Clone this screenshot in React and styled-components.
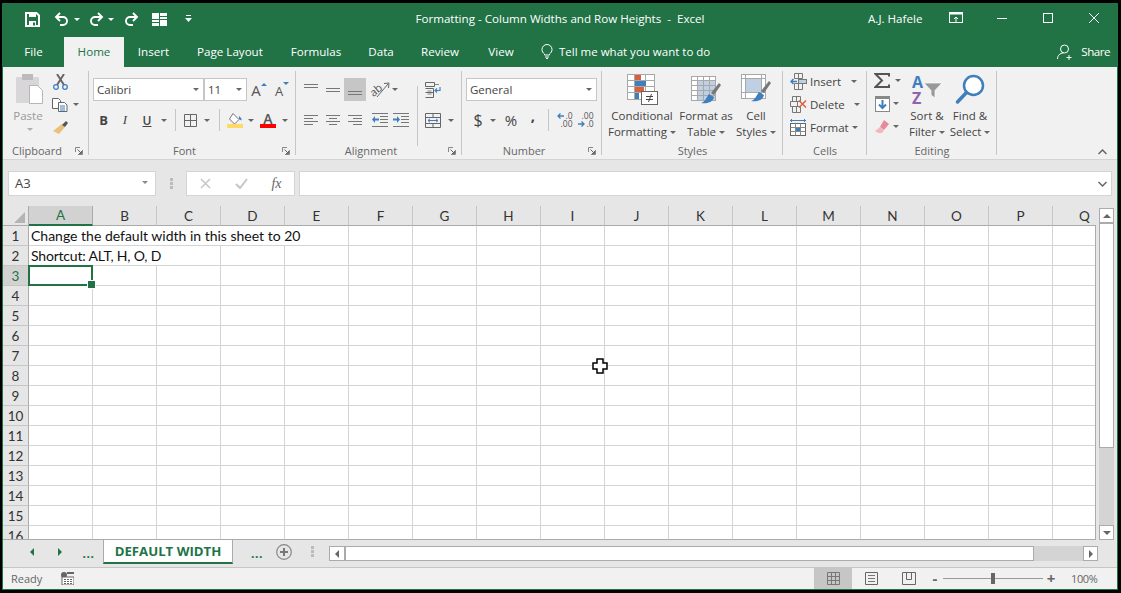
import React from 'react';
import styled, { createGlobalStyle } from 'styled-components';

const UI_FONT = '"Open Sans", "Noto Sans", sans-serif';
const CELL_FONT = '"Lato", "Open Sans", sans-serif';
const GREEN = '#217346';
const BLUE = '#3f7fbd';

const GlobalStyle = createGlobalStyle`
  html, body { margin: 0; padding: 0; height: 100%; background: #000; overflow: hidden; }
  * { box-sizing: border-box; }
`;

const Window = styled.div`
  position: relative;
  width: 1116px;
  height: 587px;
  margin: 3px 0 0 2px;
  border: 1px solid ${GREEN};
  border-top: 0;
  background: #e6e6e6;
  display: flex;
  flex-direction: column;
  font-family: ${UI_FONT};
  overflow: hidden;
`;

/* title bar */
const TitleBar = styled.div`
  height: 34px;
  flex: none;
  padding-bottom: 4px;
  background: ${GREEN};
  color: #fff;
  display: grid;
  grid-template-columns: 1fr auto 1fr;
  align-items: center;
`;
const Quick = styled.div`
  display: flex;
  align-items: center;
  padding: 2px 0 0 22px;
`;
const QuickSlot = styled.span`
  width: ${(p) => p.$w}px;
  flex: none;
  display: flex;
  justify-content: center;
  align-items: center;
`;
const WindowTitle = styled.div`
  font-size: 11.6px;
  white-space: pre;
`;
const TitleRight = styled.div`
  display: flex;
  align-items: center;
  justify-content: flex-end;
  font-size: 11.6px;
`;
const UserName = styled.span`
  width: 81px;
`;
const WinBtn = styled.span`
  width: ${(p) => p.$w}px;
  display: flex;
  justify-content: center;
`;

/* tabs */
const TabRow = styled.div`
  height: 30px;
  flex: none;
  background: ${GREEN};
  display: flex;
  align-items: stretch;
`;
const Tab = styled.div`
  width: ${(p) => p.$w}px;
  display: flex;
  align-items: center;
  justify-content: center;
  font-size: 11.6px;
  padding-bottom: 1px;
  color: ${(p) => (p.$active ? GREEN : '#fff')};
  background: ${(p) => (p.$active ? '#f1f1f1' : 'transparent')};
`;
const TellMe = styled.div`
  display: flex;
  align-items: center;
  gap: 6px;
  margin-left: 12px;
  padding-bottom: 1px;
  font-size: 11.5px;
  color: #fff;
`;
const Share = styled.div`
  margin-left: auto;
  display: flex;
  align-items: center;
  gap: 7px;
  padding: 0 7px 1px 0;
  font-size: 11.6px;
  letter-spacing: -0.5px;
  color: #fff;
`;

/* ribbon */
const Ribbon = styled.div`
  height: 93px;
  flex: none;
  background: #f1f1f1;
  border-bottom: 1px solid #d4d4d4;
  display: flex;
  color: #444;
  font-size: 11.5px;
`;
const Group = styled.section`
  position: relative;
  width: ${(p) => p.$w}px;
  flex: none;
  display: flex;
  flex-direction: column;
  &::after {
    content: '';
    position: absolute;
    top: 4px;
    bottom: 4px;
    right: 0;
    width: 1px;
    background: #c6c6c6;
  }
`;
const GroupBody = styled.div`
  height: 76px;
  flex: none;
  display: flex;
  padding-left: ${(p) => p.$pl || 0}px;
  padding-top: ${(p) => p.$pt || 0}px;
`;
const GroupLabel = styled.div`
  position: relative;
  height: 16px;
  line-height: 16px;
  text-align: center;
  color: #666;
  font-size: 11px;
  padding-right: ${(p) => p.$pr || 0}px;
`;
const Launcher = styled.span`
  position: absolute;
  right: 6px;
  top: 4px;
  display: block;
  line-height: 0;
`;
const Collapse = styled.div`
  flex: 1;
  display: flex;
  align-items: flex-end;
  justify-content: flex-end;
  padding: 0 10px 4px 0;
`;
const PasteCol = styled.div`
  width: 35px;
  flex: none;
  display: flex;
  flex-direction: column;
  align-items: center;
  padding-top: 7px;
  color: #999;
`;
const PasteLabel = styled.div`
  line-height: 16px;
  margin-top: 3px;
  margin-left: -3px;
  margin-bottom: 4px;
`;
const SmallCol = styled.div`
  display: flex;
  flex-direction: column;
  width: ${(p) => (p.$w ? `${p.$w}px` : 'auto')};
`;
const Row = styled.div`
  display: flex;
  align-items: center;
  height: ${(p) => p.$h || 22}px;
  margin-top: ${(p) => p.$mt || 0}px;
  margin-left: ${(p) => p.$ml || 0}px;
`;
const Slot = styled.span`
  width: ${(p) => p.$w}px;
  height: ${(p) => p.$h || 22}px;
  flex: none;
  display: flex;
  align-items: center;
  justify-content: center;
  background: ${(p) => (p.$active ? '#c6c6c6' : 'transparent')};
`;
const Caret = styled.i`
  display: inline-block;
  width: 0;
  height: 0;
  margin-left: ${(p) => p.$ml || 0}px;
  border-left: 3px solid transparent;
  border-right: 3px solid transparent;
  border-top: 3px solid ${(p) => p.$color || '#666'};
  vertical-align: middle;
`;
const VLine = styled.span`
  display: block;
  width: 1px;
  height: ${(p) => p.$h || 22}px;
  background: #c6c6c6;
`;
const SelectBox = styled.div`
  width: ${(p) => p.$w}px;
  height: 23px;
  flex: none;
  background: #fff;
  border: 1px solid #c6c6c6;
  display: flex;
  align-items: center;
  justify-content: space-between;
  padding: 0 4px 0 3px;
  color: #444;
  font-size: 11.5px;
`;
const GlyphBtn = styled.span`
  display: block;
  font-family: ${(p) => p.$font || UI_FONT};
  font-size: ${(p) => p.$size || 13}px;
  font-weight: ${(p) => p.$weight || 400};
  font-style: ${(p) => (p.$italic ? 'italic' : 'normal')};
  text-decoration: ${(p) => (p.$under ? 'underline' : 'none')};
  color: ${(p) => p.$color || '#444'};
  line-height: ${(p) => p.$lh || 'normal'};
  padding-bottom: ${(p) => p.$pb || 0}px;
`;
const GrowSlot = styled.span`
  width: ${(p) => p.$w}px;
  height: 22px;
  flex: none;
  display: flex;
  align-items: flex-start;
  justify-content: center;
  padding-top: ${(p) => p.$pt}px;
  gap: 0;
`;
const GrowMark = styled.span`
  display: block;
  margin-top: ${(p) => p.$mt}px;
  line-height: 0;
`;
const ColorStack = styled.span`
  display: flex;
  flex-direction: column;
  align-items: center;
  width: 16px;
`;
const ColorBar = styled.span`
  display: block;
  width: 16px;
  height: 4px;
  background: ${(p) => p.$color};
`;
const TiltedText = styled.span`
  display: block;
  width: 13px;
  margin-right: -8px;
  font-size: 11px;
  line-height: 11px;
  color: #555;
  transform: rotate(-40deg);
`;
const DecimalStack = styled.span`
  display: flex;
  flex-direction: column;
  width: 17px;
  font-size: 8.5px;
  line-height: 8px;
  color: #555;
`;
const DecimalRow = styled.span`
  display: flex;
  align-items: center;
  justify-content: flex-end;
  gap: 1px;
`;
const SortLetters = styled.span`
  display: flex;
  flex-direction: column;
  width: 12px;
  flex: none;
`;
const SortPicture = styled.span`
  display: flex;
  align-items: flex-start;
  line-height: 0;
`;
const LargeBtn = styled.div`
  width: ${(p) => p.$w}px;
  flex: none;
  display: flex;
  flex-direction: column;
  align-items: center;
  padding-top: ${(p) => p.$pt ?? 7}px;
  line-height: 16px;
  white-space: nowrap;
`;
const LargeIcon = styled.div`
  height: ${(p) => p.$h || 34}px;
  flex: none;
`;
const CellsLabel = styled.span`
  margin-left: 2px;
  white-space: nowrap;
`;
const ColumnSep = styled.div`
  width: 1px;
  height: 60px;
  margin: 8px ${(p) => p.$mr || 0}px 0 ${(p) => p.$ml || 0}px;
  background: #c6c6c6;
`;

/* formula bar */
const FormulaRow = styled.div`
  height: 46px;
  flex: none;
  display: flex;
  align-items: flex-start;
  padding: 11px 5px 0 5px;
  background: #e6e6e6;
`;
const NameBox = styled.div`
  width: 148px;
  height: 25px;
  flex: none;
  background: #fff;
  border: 1px solid #d4d4d4;
  display: flex;
  align-items: center;
  justify-content: space-between;
  padding: 0 7px 2px 6px;
  color: #444;
  font-size: 13px;
`;
const Grip = styled.div`
  width: 30px;
  height: 25px;
  flex: none;
  display: flex;
  align-items: center;
  justify-content: center;
`;
const FnButtons = styled.div`
  width: 109px;
  height: 25px;
  flex: none;
  background: #fff;
  border: 1px solid #d4d4d4;
  display: grid;
  grid-template-columns: 36px 36px 35px;
  align-items: center;
  justify-items: center;
`;
const FormulaInput = styled.div`
  flex: 1;
  height: 25px;
  margin-left: 4px;
  background: #fff;
  border: 1px solid #d4d4d4;
  display: flex;
  align-items: center;
  justify-content: flex-end;
  padding-right: 4px;
`;

/* sheet */
const SheetArea = styled.div`
  height: 334px;
  flex: none;
  display: flex;
`;
const SheetPane = styled.div`
  width: 1093px;
  flex: none;
  display: flex;
  flex-direction: column;
`;
const HeaderRow = styled.div`
  display: grid;
  grid-template-columns: 26px repeat(17, 64px);
  height: 20px;
  flex: none;
  overflow: hidden;
`;
const Corner = styled.div`
  border-bottom: 1px solid #ababab;
  border-right: 1px solid #ababab;
  display: flex;
  align-items: flex-end;
  justify-content: flex-end;
  padding: 0 3px 2px 0;
`;
const ColHead = styled.div`
  display: flex;
  align-items: center;
  justify-content: center;
  font-family: ${CELL_FONT};
  font-size: 13.5px;
  color: ${(p) => (p.$active ? GREEN : '#333')};
  background: ${(p) => (p.$active ? '#d2d2d2' : '#e6e6e6')};
  border-right: 1px solid ${(p) => (p.$active ? '#ababab' : '#c6c6c6')};
  border-bottom: ${(p) => (p.$active ? `2px solid ${GREEN}` : '1px solid #ababab')};
`;
const SheetBody = styled.div`
  flex: 1;
  overflow: hidden;
  background: #fff;
  border-right: 1px solid #ababab;
  border-bottom: 1px solid #ababab;
  display: grid;
  grid-template-columns: 26px repeat(17, 64px);
  grid-auto-rows: 20px;
`;
const RowHead = styled.div`
  display: flex;
  align-items: center;
  justify-content: center;
  font-family: ${CELL_FONT};
  font-size: 13.5px;
  color: ${(p) => (p.$active ? GREEN : '#333')};
  background: ${(p) => (p.$active ? '#d2d2d2' : '#e6e6e6')};
  border-right: 1px solid #ababab;
  border-bottom: 1px solid #c6c6c6;
`;
const Cell = styled.div`
  position: relative;
  grid-column: span ${(p) => p.$span || 1};
  border-right: 1px solid #d4d4d4;
  border-bottom: 1px solid #d4d4d4;
  padding-left: 2px;
  font-family: ${CELL_FONT};
  font-size: 14px;
  letter-spacing: ${(p) => p.$ls || 0}px;
  line-height: 19px;
  color: #111;
  white-space: nowrap;
`;
const Selection = styled.div`
  position: absolute;
  left: -1px;
  top: -1px;
  width: 65px;
  height: 21px;
  border: 2px solid ${GREEN};
  z-index: 2;
  &::after {
    content: '';
    position: absolute;
    right: -5px;
    bottom: -5px;
    width: 7px;
    height: 7px;
    background: ${GREEN};
    border: 1px solid #fff;
  }
`;
const VScroll = styled.div`
  width: 15px;
  margin: 2px 0 0 3px;
  flex: none;
  display: flex;
  flex-direction: column;
`;
const ScrollBtn = styled.div`
  width: ${(p) => p.$w || 15}px;
  height: ${(p) => p.$h || 15}px;
  flex: none;
  background: #fff;
  border: 1px solid #ababab;
  display: flex;
  align-items: center;
  justify-content: center;
`;
const VThumb = styled.div`
  height: 225px;
  flex: none;
  background: #fff;
  border: 1px solid #ababab;
`;
const VTrack = styled.div`
  flex: 1;
  background: #d4d4d4;
`;

/* sheet tabs */
const TabBar = styled.div`
  height: 28px;
  flex: none;
  padding-left: 15px;
  background: #e6e6e6;
  border-bottom: 1px solid #c6c6c6;
  display: flex;
  align-items: flex-start;
`;
const NavSlot = styled.div`
  width: ${(p) => p.$w}px;
  height: 23px;
  flex: none;
  display: flex;
  align-items: center;
  justify-content: center;
`;
const Dots = styled.span`
  color: ${GREEN};
  font-weight: 700;
  font-size: 12px;
  letter-spacing: 0.5px;
  padding-top: 4px;
  margin-left: ${(p) => p.$ml || 0}px;
`;
const SheetTab = styled.div`
  width: 130px;
  height: 24px;
  flex: none;
  background: #fff;
  border-left: 1px solid #ababab;
  border-right: 1px solid #ababab;
  border-bottom: 2px solid ${GREEN};
  display: flex;
  align-items: center;
  justify-content: center;
  color: ${GREEN};
  font-weight: 700;
  font-size: 13.2px;
  white-space: nowrap;
`;
const HScroll = styled.div`
  width: 769px;
  height: 15px;
  margin-top: 6px;
  flex: none;
  display: flex;
  background: #d4d4d4;
`;
const HThumb = styled.div`
  width: 689px;
  flex: none;
  background: #fff;
  border: 1px solid #ababab;
`;
const HTrackSpace = styled.div`
  flex: 1;
`;

/* status bar */
const StatusBar = styled.div`
  height: 21px;
  flex: none;
  padding-right: 19px;
  background: #f1f1f1;
  display: flex;
  align-items: center;
  color: #666;
  font-size: 11px;
`;
const Ready = styled.span`
  width: 58px;
  padding-left: 8px;
`;
const ViewSlot = styled.div`
  width: ${(p) => p.$w}px;
  height: 21px;
  flex: none;
  display: flex;
  align-items: center;
  justify-content: center;
  background: ${(p) => (p.$active ? '#c6c6c6' : 'transparent')};
`;
const Spring = styled.div`
  flex: 1;
`;
const ZoomSlider = styled.div`
  position: relative;
  width: 100px;
  height: 1px;
  flex: none;
  background: #999;
  &::after {
    content: '';
    position: absolute;
    left: 48px;
    top: -5px;
    width: 4px;
    height: 11px;
    background: #666;
  }
`;
const ZoomValue = styled.span`
  width: 27px;
  margin-left: 12px;
  font-size: 11px;
  letter-spacing: -0.4px;
  white-space: nowrap;
`;
const ZoomSign = styled.span`
  width: ${(p) => p.$w}px;
  flex: none;
  text-align: center;
  font-size: 15px;
  font-weight: 700;
  line-height: 1;
  color: #666;
`;
const PointerLayer = styled.div`
  position: absolute;
  left: 589px;
  top: 355px;
  line-height: 0;
  pointer-events: none;
`;
const FxGlyph = styled.span`
  font-family: "Liberation Serif", serif;
  font-style: italic;
  font-size: 14px;
  color: #666;
`;

const Svg = ({ w, h, children }) => (
  <svg width={w} height={h} viewBox={`0 0 ${w} ${h}`} style={{ display: 'block', flex: 'none' }}>{children}</svg>
);

const SaveIcon = () => (
  <Svg w={15} h={15}>
    <path d="M1 1h10.500L14 3.500V14H1z" fill="none" stroke="#fff" strokeWidth="2" />
    <rect x="4" y="1" width="7" height="4" fill="#fff" />
    <rect x="4" y="9" width="7" height="5" fill="#fff" />
    <rect x="8" y="10.500" width="2" height="3" fill={GREEN} />
  </Svg>
);
const UndoIcon = ({ flip }) => (
  <Svg w={15} h={14}>
    <g transform={flip ? 'translate(15,0) scale(-1,1)' : undefined} fill="none" stroke="#fff" strokeWidth="1.900">
      <path d="M2 5h7a4 4 0 0 1 0 8H6" />
      <path d="M6 1L2 5l4 4" />
    </g>
  </Svg>
);
const QuickGrid = () => (
  <Svg w={15} h={13}>
    <rect x="0" y="0" width="7" height="6" fill="#fff" />
    <rect x="8" y="0" width="7" height="3" fill="#fff" />
    <rect x="8" y="4" width="7" height="2" fill="#fff" />
    <rect x="0" y="7" width="7" height="2" fill="#fff" />
    <rect x="0" y="10" width="7" height="3" fill="#fff" />
    <rect x="8" y="7" width="7" height="6" fill="#fff" />
  </Svg>
);
const CustomizeIcon = () => (
  <Svg w={7} h={8}>
    <rect x="1" y="0" width="5" height="1" fill="#fff" />
    <path d="M0 3h7L3.500 7z" fill="#fff" />
  </Svg>
);
const DisplayIcon = () => (
  <Svg w={14} h={12}>
    <rect x="0.500" y="0.500" width="13" height="10" fill="none" stroke="#fff" />
    <rect x="0.500" y="0.500" width="13" height="2" fill="#fff" />
    <path d="M7 10V5M5 7l2-2 2 2" fill="none" stroke="#fff" />
  </Svg>
);
const MinIcon = () => <Svg w={10} h={10}><rect x="0" y="5" width="10" height="1" fill="#fff" /></Svg>;
const MaxIcon = () => <Svg w={10} h={10}><rect x="0.500" y="0.500" width="9" height="9" fill="none" stroke="#fff" /></Svg>;
const CloseIcon = () => <Svg w={10} h={10}><path d="M0 0l10 10M10 0L0 10" stroke="#fff" /></Svg>;
const BulbIcon = () => (
  <Svg w={12} h={15}>
    <path d="M3.500 10C2 8.800 1 7.500 1 5.500a5 5 0 0 1 10 0c0 2-1 3.300-2.500 4.500V11h-5z" fill="none" stroke="#fff" />
    <path d="M4 13h4M5 14.500h2" stroke="#fff" />
  </Svg>
);
const UserIcon = () => (
  <Svg w={17} h={16}>
    <circle cx="7.500" cy="5" r="4" fill="none" stroke="#fff" />
    <path d="M0.500 15c0-3.500 2.500-6 6-6M12 11v5M9.500 13.500h5" fill="none" stroke="#fff" />
  </Svg>
);
const PasteIcon = () => (
  <Svg w={29} h={31}>
    <rect x="1" y="3" width="23" height="26" rx="1" fill="#d9d6d9" />
    <rect x="7" y="0" width="11" height="6" fill="#bdbabd" />
    <path d="M14.500 11.500h8l5 5v13h-13z" fill="#fff" stroke="#b5b5b5" />
  </Svg>
);
const ScissorsIcon = () => (
  <Svg w={15} h={16}>
    <path d="M4 11L11 0M11 11L4 0" stroke="#666" strokeWidth="2" />
    <circle cx="3" cy="13" r="2.300" fill="none" stroke={BLUE} strokeWidth="1.300" />
    <circle cx="12" cy="13" r="2.300" fill="none" stroke={BLUE} strokeWidth="1.300" />
  </Svg>
);
const CopyIcon = () => (
  <Svg w={16} h={14}>
    <path d="M0.500 0.500h6l2 2v8h-8z" fill="#fff" stroke="#666" />
    <path d="M6.500 4.500h6l2.500 2.500v6.500H6.500z" fill="#fff" stroke="#666" />
    <path d="M8 8h5M8 10h5M8 12h5" stroke={BLUE} />
  </Svg>
);
const PainterIcon = () => (
  <Svg w={16} h={15}>
    <path d="M10 4l3 3-6 7-6-3z" fill="#e8c27c" />
    <path d="M10 5l4-4 2 2-3 4z" fill="#555" />
  </Svg>
);
const SmallLauncher = () => (
  <Svg w={8} h={8}>
    <path d="M0.500 5V0.500H5M7.500 3v4.500H3" fill="none" stroke="#888" />
    <path d="M2.500 2.500l4 4M6.500 4v2.500H4" fill="none" stroke="#666" />
  </Svg>
);
const BordersIcon = () => (
  <Svg w={13} h={13}>
    <path d="M0.500 0.500h12v12H0.500zM6.500 0.500v12M0.500 6.500h12" fill="none" stroke="#666" />
  </Svg>
);
const FillIcon = () => (
  <Svg w={16} h={15}>
    <path d="M6 0.500l6 6-4.500 4.500-5-5z" fill="#fff" stroke="#777" />
    <path d="M12 3c2 1.500 3 3 2.500 4.500L12 6z" fill={BLUE} />
    <rect x="0" y="11" width="16" height="4" fill="#ffd966" />
  </Svg>
);
const Lines = ({ ys, x1 = 0, x2 = 14, lens }) => (
  <>
    {ys.map((y, i) => (
      <rect key={y} x={lens ? lens[i][0] : x1} y={y} width={lens ? lens[i][1] : x2 - x1} height="1" fill="#777" />
    ))}
  </>
);
const VAlignIcon = ({ offset }) => (
  <Svg w={14} h={14}>
    <Lines ys={[offset, offset + 3]} />
  </Svg>
);
const HAlignIcon = ({ mode }) => {
  const starts = { left: [[0, 14], [0, 9], [0, 14], [0, 9]], center: [[0, 14], [3, 8], [0, 14], [3, 8]], right: [[0, 14], [5, 9], [0, 14], [5, 9]] };
  return <Svg w={14} h={12}><Lines ys={[1, 4, 7, 10]} lens={starts[mode]} /></Svg>;
};
const OrientArrow = () => (
  <Svg w={16} h={17}>
    <path d="M3 16L14 3M10 2.500l5-0.500-0.500 5" fill="none" stroke="#666" />
  </Svg>
);
const IndentIcon = ({ flip }) => (
  <Svg w={16} h={14}>
    <Lines ys={[0, 13]} x1={0} x2={16} />
    <Lines ys={[3, 6, 9]} x1={8} x2={16} />
    <path d={flip ? 'M0 5.500h4V3l3 3.500-3 3.500V7.500H0z' : 'M7 5.500H3V3L0 6.500 3 10V7.500h4z'} fill={BLUE} />
  </Svg>
);
const WrapIcon = () => (
  <Svg w={16} h={16}>
    <path d="M0.500 0.500h9v4h-9zM0.500 10.500h8M0.500 6.500h8v9h-8" fill="none" stroke="#666" />
    <path d="M9.500 2.500H14M2.500 9h4M2.500 12h4" stroke="#888" />
    <path d="M15 5v3.500H10M12 6.500l-2 2 2 2" fill="none" stroke={BLUE} strokeWidth="1.200" />
  </Svg>
);
const MergeIcon = () => (
  <Svg w={16} h={15}>
    <path d="M0.500 0.500h15v14H0.500zM0.500 4.500h15M0.500 10.500h15M8 0.500v4M8 10.500v4" fill="none" stroke="#666" />
    <path d="M3 7.500h10M5 5.800L3 7.500l2 1.700M11 5.800l2 1.700-2 1.700" fill="none" stroke={BLUE} />
  </Svg>
);
const DecArrow = ({ right }) => (
  <Svg w={7} h={6}>
    <path d={right ? 'M0 3h6M3.500 0.500L6 3 3.500 5.500' : 'M7 3H1M3.500 0.500L1 3l2.500 2.500'} fill="none" stroke={BLUE} strokeWidth="1.300" />
  </Svg>
);
const ConditionalIcon = () => (
  <Svg w={31} h={32}>
    <rect x="0.500" y="0.500" width="27" height="25" fill="#fff" stroke="#a8a8a8" />
    <path d="M7.500 0.500v25M18.500 0.500v20M0.500 6.500h27M0.500 12.500h27M0.500 18.500h27" stroke="#a8a8a8" />
    <rect x="8" y="1" width="6" height="5" fill="#d9603b" />
    <rect x="8" y="7" width="11" height="5" fill={BLUE} />
    <rect x="8" y="13" width="9" height="5" fill="#d9603b" />
    <rect x="8" y="19" width="4" height="6" fill={BLUE} />
    <rect x="14.500" y="17.500" width="16" height="13" fill="#fff" stroke="#666" />
    <path d="M19 22.500h7M19 25.500h7M24.500 20l-3 8" stroke="#444" />
  </Svg>
);
const Brush = () => (
  <>
    <path d="M20 17L28 7l2 2-7 10z" fill="#777" />
    <path d="M18 18l5 3c-1 5-6 7-13 6 4-1 5-5 8-9z" fill={BLUE} />
  </>
);
const TableIcon = () => (
  <Svg w={31} h={30}>
    <rect x="0.500" y="0.500" width="24" height="24" fill="#fff" stroke="#a8a8a8" />
    <rect x="7" y="5" width="17" height="19" fill="#bfd0e3" />
    <path d="M6.500 0.500v24M12.500 0.500v24M18.500 0.500v24M0.500 4.500h24M0.500 9.500h24M0.500 14.500h24M0.500 19.500h24" stroke="#a8a8a8" />
    <Brush />
  </Svg>
);
const CellStylesIcon = () => (
  <Svg w={31} h={30}>
    <rect x="0.500" y="0.500" width="24" height="24" fill="#fff" stroke="#a8a8a8" />
    <rect x="5" y="5" width="15" height="13" fill="#bfd0e3" />
    <path d="M4.500 0.500v24M20.500 0.500v24M0.500 4.500h24M0.500 18.500h24" stroke="#a8a8a8" />
    <Brush />
  </Svg>
);
const InsertCellsIcon = () => (
  <Svg w={17} h={17}>
    <path d="M4.500 0.500h8v5h-8zM8.500 0.500v5M4.500 10.500h8v6h-8zM8.500 10.500v6" fill="none" stroke="#777" />
    <rect x="8.500" y="6.500" width="8" height="4" fill="#bfd0e3" stroke="#777" />
    <path d="M7 8.500H1M3.500 6L1 8.500 3.500 11" fill="none" stroke={BLUE} strokeWidth="1.500" />
  </Svg>
);
const DeleteCellsIcon = () => (
  <Svg w={17} h={17}>
    <path d="M2.500 0.500h8v5h-8zM6.500 0.500v5M2.500 10.500h8v6h-8zM6.500 10.500v6M0.500 5.500h7v5h-7z" fill="none" stroke="#777" />
    <path d="M9 4.500l7 7M16 4.500l-7 7" stroke="#d9603b" strokeWidth="1.500" />
  </Svg>
);
const FormatCellsIcon = () => (
  <Svg w={16} h={17}>
    <path d="M0 1.500h16M1.500 0v3M14.500 0v3" stroke={BLUE} />
    <rect x="0.500" y="4.500" width="15" height="12" fill="#fff" stroke="#666" />
    <path d="M5.500 4.500v12M10.500 4.500v12M0.500 8.500h15M0.500 12.500h15" stroke="#888" />
    <rect x="6" y="9" width="4" height="3" fill={BLUE} />
  </Svg>
);
const SigmaIcon = () => (
  <Svg w={16} h={15}>
    <path d="M15 3.500V1H1.500L8 7.500 1.500 14H15v-2.500" fill="none" stroke="#555" strokeWidth="2" />
  </Svg>
);
const FillDownIcon = () => (
  <Svg w={15} h={16}>
    <rect x="0.500" y="0.500" width="14" height="15" fill="#fff" stroke="#888" />
    <rect x="0" y="0" width="15" height="3" fill="#888" />
    <path d="M7.500 4v8M4 8.500l3.500 3.500L11 8.500" fill="none" stroke={BLUE} strokeWidth="2" />
  </Svg>
);
const EraserIcon = () => (
  <Svg w={16} h={13}>
    <path d="M10 0l5 4-5 6-4-3z" fill="#e88a9b" />
    <path d="M6 7l4 3-2 3H4l-3-2z" fill="#f2b8c2" />
  </Svg>
);
const FunnelIcon = () => (
  <Svg w={18} h={24}>
    <path d="M0 9h18l-7 7.500V24l-4-3v-4.500z" fill="#999" stroke="#fff" strokeWidth="0.700" />
  </Svg>
);
const FindIcon = () => (
  <Svg w={30} h={31}>
    <circle cx="18.500" cy="11.500" r="9.500" fill="#fff" stroke={BLUE} strokeWidth="2.500" />
    <path d="M11.500 18.500L2.500 28" stroke={BLUE} strokeWidth="3.500" strokeLinecap="round" />
  </Svg>
);
const ChevronUp = () => (
  <Svg w={9} h={6}><path d="M0.500 5l4-4 4 4" fill="none" stroke="#666" strokeWidth="1.500" /></Svg>
);
const ChevronDown = () => (
  <Svg w={9} h={6}><path d="M0.500 1l4 4 4-4" fill="none" stroke="#666" strokeWidth="1.500" /></Svg>
);
const GripDots = () => (
  <Svg w={3} h={11}>
    <rect y="0" width="3" height="3" fill="#bbb" />
    <rect y="4" width="3" height="3" fill="#bbb" />
    <rect y="8" width="3" height="3" fill="#bbb" />
  </Svg>
);
const CrossIcon = () => <Svg w={11} h={11}><path d="M1 1l9 9M10 1l-9 9" stroke="#c6c6c6" strokeWidth="1.500" /></Svg>;
const CheckIcon = () => <Svg w={13} h={11}><path d="M1 6l4 4 7-9" fill="none" stroke="#c6c6c6" strokeWidth="2" /></Svg>;
const CornerMark = () => <Svg w={11} h={11}><path d="M11 0v11H0z" fill="#b4b4b4" /></Svg>;
const Tri = ({ dir, color = '#666', size = 4 }) => {
  const paths = {
    up: `M0 ${size}h${size * 2}L${size} 0z`,
    down: `M0 0h${size * 2}L${size} ${size}z`,
    left: `M${size} 0v${size * 2}L0 ${size}z`,
    right: `M0 0v${size * 2}L${size} ${size}z`,
  };
  const vertical = dir === 'up' || dir === 'down';
  return (
    <Svg w={vertical ? size * 2 : size} h={vertical ? size : size * 2}>
      <path d={paths[dir]} fill={color} />
    </Svg>
  );
};
const PlusCircle = () => (
  <Svg w={16} h={16}>
    <circle cx="8" cy="8" r="7.300" fill="none" stroke="#888" strokeWidth="1.200" />
    <path d="M4 8h8M8 4v8" stroke="#777" strokeWidth="2" />
  </Svg>
);
const MacroIcon = () => (
  <Svg w={13} h={13}>
    <circle cx="3" cy="3" r="3" fill="#666" />
    <rect x="1" y="5" width="12" height="8" fill="#fff" stroke="#666" />
    <rect x="6" y="0" width="7" height="2" fill="#666" />
    <path d="M3 7.500h8M3 9.500h8M3 11.500h8" stroke="#666" strokeDasharray="2 1" />
  </Svg>
);
const NormalViewIcon = () => (
  <Svg w={13} h={13}><path d="M0.500 0.500h12v12H0.500zM4.500 0.500v12M8.500 0.500v12M0.500 4.500h12M0.500 8.500h12" fill="none" stroke="#777" /></Svg>
);
const LayoutViewIcon = () => (
  <Svg w={13} h={13}>
    <path d="M0.500 0.500h12v12H0.500z" fill="none" stroke="#666" />
    <path d="M3 3.500h7M3 6.500h7M3 9.500h7" stroke="#777" />
  </Svg>
);
const BreakViewIcon = () => (
  <Svg w={14} h={13}><path d="M0.500 0.500h13v12H0.500zM4.500 0.500v7h5v-7" fill="none" stroke="#666" /></Svg>
);
const PointerIcon = () => (
  <Svg w={16} h={16}>
    <path d="M5 1h6v4h4v6h-4v4H5v-4H1V5h4z" fill="#fff" stroke="#000" strokeWidth="1.500" />
  </Svg>
);

const COLUMNS = 'ABCDEFGHIJKLMNOPQ'.split('');

const rowContent = {
  1: { text: 'Change the default width in this sheet to 20', span: 5 },
  2: { text: 'Shortcut: ALT, H, O, D', span: 3, ls: -0.2 },
};

const SheetRow = ({ number }) => {
  const content = rowContent[number];
  const used = content ? content.span : 0;
  return (
    <>
      <RowHead $active={number === 3}>{number}</RowHead>
      {content && <Cell $span={content.span} $ls={content.ls}>{content.text}</Cell>}
      {COLUMNS.slice(used).map((col, i) => (
        <Cell key={col}>{number === 3 && i === 0 && <Selection />}</Cell>
      ))}
    </>
  );
};

const ClipboardGroup = () => (
  <Group $w={86}>
    <GroupBody $pl={9}>
      <PasteCol>
        <PasteIcon />
        <PasteLabel>Paste</PasteLabel>
        <Caret $color="#b0b0b0" />
      </PasteCol>
      <SmallCol>
        <Row $h={23} $mt={3}><Slot $w={26}><ScissorsIcon /></Slot></Row>
        <Row $h={23}><Slot $w={26}><CopyIcon /></Slot><Caret /></Row>
        <Row $h={23}><Slot $w={26}><PainterIcon /></Slot></Row>
      </SmallCol>
    </GroupBody>
    <GroupLabel $pr={18}>Clipboard<Launcher><SmallLauncher /></Launcher></GroupLabel>
  </Group>
);

const FontGroup = () => (
  <Group $w={207}>
    <GroupBody $pl={4} $pt={11}>
      <SmallCol>
        <Row $h={23}>
          <SelectBox $w={111}>Calibri<Caret /></SelectBox>
          <SelectBox $w={43}>11<Caret /></SelectBox>
          <GrowSlot $w={24} $pt={1}>
            <GlyphBtn $size={15} $color="#555" $lh="20px">A</GlyphBtn>
            <GrowMark $mt={3}><Tri dir="up" color={BLUE} size={3} /></GrowMark>
          </GrowSlot>
          <GrowSlot $w={22} $pt={3}>
            <GlyphBtn $size={13} $color="#555" $lh="18px">A</GlyphBtn>
            <GrowMark $mt={0}><Tri dir="down" color={BLUE} size={3} /></GrowMark>
          </GrowSlot>
        </Row>
        <Row $mt={8}>
          <Slot $w={21}><GlyphBtn $weight={700} $size={13}>B</GlyphBtn></Slot>
          <Slot $w={22}><GlyphBtn $italic $size={13} $font='"Liberation Serif", serif'>I</GlyphBtn></Slot>
          <Slot $w={22}><GlyphBtn $under $weight={600} $size={12}>U</GlyphBtn></Slot>
          <Slot $w={12}><Caret /></Slot>
          <Slot $w={10}><VLine /></Slot>
          <Slot $w={20}><BordersIcon /></Slot>
          <Slot $w={14}><Caret /></Slot>
          <Slot $w={10}><VLine /></Slot>
          <Slot $w={21}><FillIcon /></Slot>
          <Slot $w={12}><Caret /></Slot>
          <Slot $w={22}>
            <ColorStack>
              <GlyphBtn $size={14} $weight={600} $color="#555" $lh="11px">A</GlyphBtn>
              <ColorBar $color="#ff0000" />
            </ColorStack>
          </Slot>
          <Slot $w={11}><Caret /></Slot>
        </Row>
      </SmallCol>
    </GroupBody>
    <GroupLabel $pr={16}>Font<Launcher><SmallLauncher /></Launcher></GroupLabel>
  </Group>
);

const AlignmentGroup = () => (
  <Group $w={166}>
    <GroupBody $pl={4} $pt={11}>
      <SmallCol $w={116}>
        <Row $h={23}>
          <Slot $w={22} $h={23}><VAlignIcon offset={1} /></Slot>
          <Slot $w={22} $h={23}><VAlignIcon offset={5} /></Slot>
          <Slot $w={22} $h={23} $active><VAlignIcon offset={8} /></Slot>
          <Slot $w={26}><TiltedText>ab</TiltedText><OrientArrow /></Slot>
          <Slot $w={6}><Caret /></Slot>
        </Row>
        <Row $mt={8}>
          <Slot $w={22}><HAlignIcon mode="left" /></Slot>
          <Slot $w={22}><HAlignIcon mode="center" /></Slot>
          <Slot $w={22}><HAlignIcon mode="right" /></Slot>
          <Slot $w={28}><IndentIcon /></Slot>
          <Slot $w={14}><IndentIcon flip /></Slot>
        </Row>
      </SmallCol>
      <ColumnSep $ml={1} />
      <SmallCol>
        <Row $h={23} $ml={5}><Slot $w={20}><WrapIcon /></Slot></Row>
        <Row $mt={8} $ml={5}><Slot $w={20}><MergeIcon /></Slot><Slot $w={16}><Caret /></Slot></Row>
      </SmallCol>
    </GroupBody>
    <GroupLabel $pr={16}>Alignment<Launcher><SmallLauncher /></Launcher></GroupLabel>
  </Group>
);

const NumberGroup = () => (
  <Group $w={140}>
    <GroupBody $pl={4} $pt={11}>
      <SmallCol>
        <Row $h={23}><SelectBox $w={131}>General<Caret /></SelectBox></Row>
        <Row $mt={8} $ml={2}>
          <Slot $w={20}><GlyphBtn $size={16}>$</GlyphBtn></Slot>
          <Slot $w={10}><Caret /></Slot>
          <Slot $w={26}><GlyphBtn $size={15}>%</GlyphBtn></Slot>
          <Slot $w={18}><GlyphBtn $size={15} $weight={700} $lh="12px" $pb={10}>,</GlyphBtn></Slot>
          <Slot $w={12}><VLine /></Slot>
          <Slot $w={20}>
            <DecimalStack>
              <DecimalRow><DecArrow />.0</DecimalRow>
              <DecimalRow>.00</DecimalRow>
            </DecimalStack>
          </Slot>
          <Slot $w={22}>
            <DecimalStack>
              <DecimalRow>.00</DecimalRow>
              <DecimalRow><DecArrow right />.0</DecimalRow>
            </DecimalStack>
          </Slot>
        </Row>
      </SmallCol>
    </GroupBody>
    <GroupLabel $pr={16}>Number<Launcher><SmallLauncher /></Launcher></GroupLabel>
  </Group>
);

const StylesGroup = () => (
  <Group $w={181}>
    <GroupBody $pl={2}>
      <LargeBtn $w={76}>
        <LargeIcon><ConditionalIcon /></LargeIcon>
        <span>Conditional</span>
        <span>Formatting<Caret $ml={3} /></span>
      </LargeBtn>
      <LargeBtn $w={52} $pt={9}>
        <LargeIcon $h={32}><TableIcon /></LargeIcon>
        <span>Format as</span>
        <span>Table<Caret $ml={3} /></span>
      </LargeBtn>
      <LargeBtn $w={48} $pt={7}>
        <LargeIcon><CellStylesIcon /></LargeIcon>
        <span>Cell</span>
        <span>Styles<Caret $ml={3} /></span>
      </LargeBtn>
    </GroupBody>
    <GroupLabel>Styles</GroupLabel>
  </Group>
);

const CellsGroup = () => (
  <Group $w={84}>
    <GroupBody $pl={5} $pt={3}>
      <SmallCol>
        <Row $h={23}><Slot $w={20}><InsertCellsIcon /></Slot><CellsLabel>Insert</CellsLabel><Caret $ml={10} /></Row>
        <Row $h={23}><Slot $w={20}><DeleteCellsIcon /></Slot><CellsLabel>Delete</CellsLabel><Caret $ml={9} /></Row>
        <Row $h={23}><Slot $w={20}><FormatCellsIcon /></Slot><CellsLabel>Format</CellsLabel><Caret $ml={3} /></Row>
      </SmallCol>
    </GroupBody>
    <GroupLabel>Cells</GroupLabel>
  </Group>
);

const EditingGroup = () => (
  <Group $w={130}>
    <GroupBody $pl={5}>
      <SmallCol $w={33}>
        <Row $h={23} $mt={2}><Slot $w={20}><SigmaIcon /></Slot><Caret $ml={3} /></Row>
        <Row $h={23}><Slot $w={20}><FillDownIcon /></Slot><Caret $ml={1} /></Row>
        <Row $h={23}><Slot $w={20}><EraserIcon /></Slot><Caret $ml={1} /></Row>
      </SmallCol>
      <LargeBtn $w={44}>
        <LargeIcon>
          <SortPicture>
            <SortLetters>
              <GlyphBtn $size={16} $weight={700} $color={BLUE} $lh="16px">A</GlyphBtn>
              <GlyphBtn $size={16} $weight={700} $color="#8f63ae" $lh="16px">Z</GlyphBtn>
            </SortLetters>
            <FunnelIcon />
          </SortPicture>
        </LargeIcon>
        <span>Sort &amp;</span>
        <span>Filter<Caret $ml={3} /></span>
      </LargeBtn>
      <LargeBtn $w={42}>
        <LargeIcon><FindIcon /></LargeIcon>
        <span>Find &amp;</span>
        <span>Select<Caret $ml={3} /></span>
      </LargeBtn>
    </GroupBody>
    <GroupLabel>Editing</GroupLabel>
  </Group>
);

export default function App() {
  return (
    <>
      <GlobalStyle />
      <Window>
        <TitleBar>
          <Quick>
            <QuickSlot $w={15}><SaveIcon /></QuickSlot>
            <QuickSlot $w={14} />
            <QuickSlot $w={15}><UndoIcon /></QuickSlot>
            <QuickSlot $w={15}><Caret $color="#fff" /></QuickSlot>
            <QuickSlot $w={5} />
            <QuickSlot $w={15}><UndoIcon flip /></QuickSlot>
            <QuickSlot $w={14}><Caret $color="#fff" /></QuickSlot>
            <QuickSlot $w={6} />
            <QuickSlot $w={15}><UndoIcon flip /></QuickSlot>
            <QuickSlot $w={13} />
            <QuickSlot $w={15}><QuickGrid /></QuickSlot>
            <QuickSlot $w={17} />
            <QuickSlot $w={8}><CustomizeIcon /></QuickSlot>
          </Quick>
          <WindowTitle>Formatting - Column Widths and Row Heights  -  Excel</WindowTitle>
          <TitleRight>
            <UserName>A.J. Hafele</UserName>
            <WinBtn $w={14}><DisplayIcon /></WinBtn>
            <WinBtn $w={16} />
            <WinBtn $w={46}><MinIcon /></WinBtn>
            <WinBtn $w={46}><MaxIcon /></WinBtn>
            <WinBtn $w={46}><CloseIcon /></WinBtn>
          </TitleRight>
        </TitleBar>
        <TabRow>
          <Tab $w={61}>File</Tab>
          <Tab $w={60} $active>Home</Tab>
          <Tab $w={59}>Insert</Tab>
          <Tab $w={94}>Page Layout</Tab>
          <Tab $w={78}>Formulas</Tab>
          <Tab $w={52}>Data</Tab>
          <Tab $w={66}>Review</Tab>
          <Tab $w={56}>View</Tab>
          <TellMe><BulbIcon />Tell me what you want to do</TellMe>
          <Share><UserIcon />Share</Share>
        </TabRow>
        <Ribbon>
          <ClipboardGroup />
          <FontGroup />
          <AlignmentGroup />
          <NumberGroup />
          <StylesGroup />
          <CellsGroup />
          <EditingGroup />
          <Collapse><ChevronUp /></Collapse>
        </Ribbon>
        <FormulaRow>
          <NameBox>A3<Caret $color="#888" /></NameBox>
          <Grip><GripDots /></Grip>
          <FnButtons>
            <CrossIcon />
            <CheckIcon />
            <FxGlyph>fx</FxGlyph>
          </FnButtons>
          <FormulaInput><ChevronDown /></FormulaInput>
        </FormulaRow>
        <SheetArea>
          <SheetPane>
            <HeaderRow>
              <Corner><CornerMark /></Corner>
              {COLUMNS.map((col) => <ColHead key={col} $active={col === 'A'}>{col}</ColHead>)}
            </HeaderRow>
            <SheetBody>
              {Array.from({ length: 16 }, (_, i) => <SheetRow key={i} number={i + 1} />)}
            </SheetBody>
          </SheetPane>
          <VScroll>
            <ScrollBtn><Tri dir="up" /></ScrollBtn>
            <VThumb />
            <VTrack />
            <ScrollBtn><Tri dir="down" /></ScrollBtn>
          </VScroll>
        </SheetArea>
        <TabBar>
          <NavSlot $w={28}><Tri dir="left" color={GREEN} /></NavSlot>
          <NavSlot $w={28}><Tri dir="right" color={GREEN} /></NavSlot>
          <NavSlot $w={29}><Dots>...</Dots></NavSlot>
          <SheetTab>DEFAULT WIDTH</SheetTab>
          <NavSlot $w={40}><Dots $ml={8}>...</Dots></NavSlot>
          <NavSlot $w={22}><PlusCircle /></NavSlot>
          <NavSlot $w={34}><GripDots /></NavSlot>
          <HScroll>
            <ScrollBtn $w={16}><Tri dir="left" /></ScrollBtn>
            <HThumb />
            <HTrackSpace />
            <ScrollBtn $w={15}><Tri dir="right" /></ScrollBtn>
          </HScroll>
        </TabBar>
        <StatusBar>
          <Ready>Ready</Ready>
          <MacroIcon />
          <Spring />
          <ViewSlot $w={38} $active><NormalViewIcon /></ViewSlot>
          <ViewSlot $w={38}><LayoutViewIcon /></ViewSlot>
          <ViewSlot $w={37}><BreakViewIcon /></ViewSlot>
          <ZoomSign $w={16}>-</ZoomSign>
          <ZoomSlider />
          <ZoomSign $w={16}>+</ZoomSign>
          <ZoomValue>100%</ZoomValue>
        </StatusBar>
        <PointerLayer><PointerIcon /></PointerLayer>
      </Window>
    </>
  );
}
